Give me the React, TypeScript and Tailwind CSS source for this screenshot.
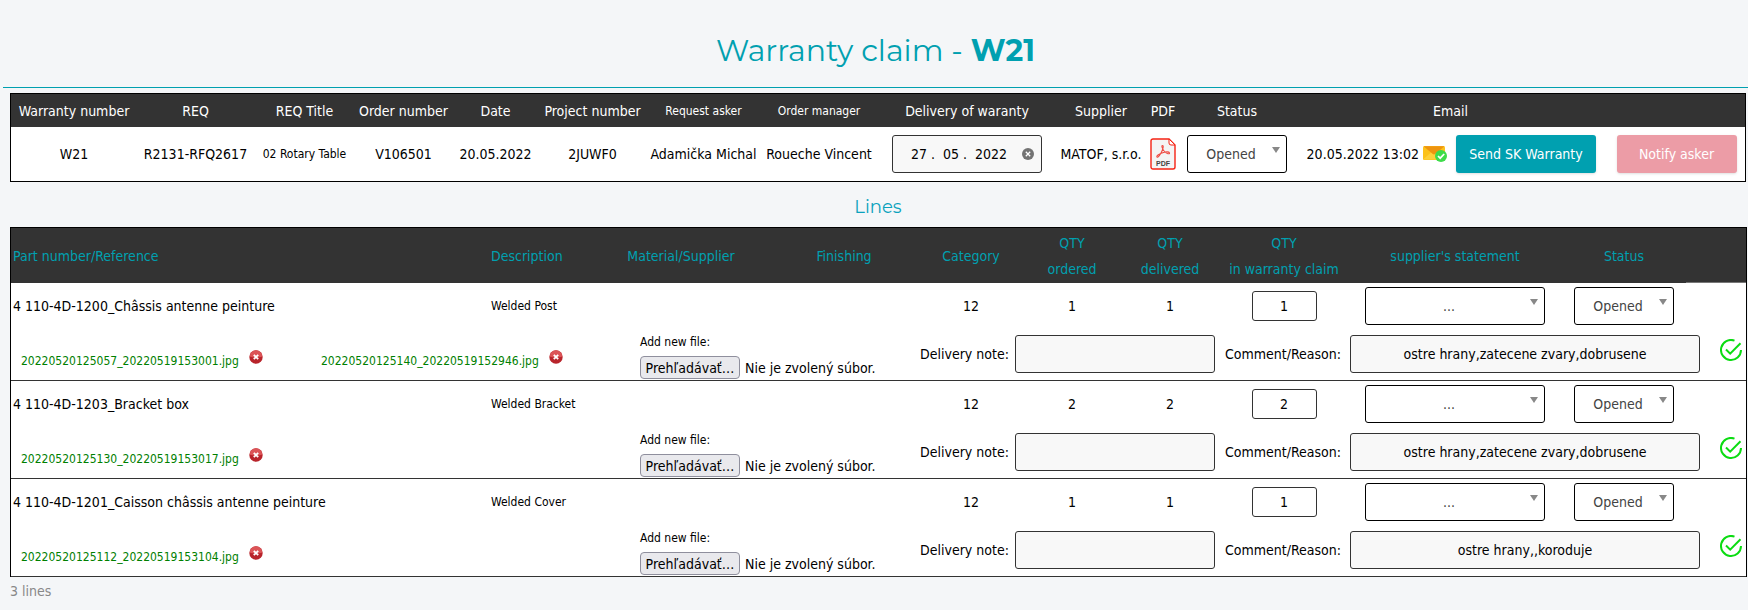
import type { ReactNode } from 'react';

const lines = [
  {
    id: 'l1',
    part: '4 110-4D-1200_Châssis antenne peinture',
    description: 'Welded Post',
    category: '12',
    qty: '1',
    files: ['20220520125057_20220519153001.jpg', '20220520125140_20220519152946.jpg'],
    comment: 'ostre hrany,zatecene zvary,dobrusene'
  },
  {
    id: 'l2',
    part: '4 110-4D-1203_Bracket box',
    description: 'Welded Bracket',
    category: '12',
    qty: '2',
    files: ['20220520125130_20220519153017.jpg'],
    comment: 'ostre hrany,zatecene zvary,dobrusene'
  },
  {
    id: 'l3',
    part: '4 110-4D-1201_Caisson châssis antenne peinture',
    description: 'Welded Cover',
    category: '12',
    qty: '1',
    files: ['20220520125112_20220519153104.jpg'],
    comment: 'ostre hrany,,koroduje'
  }
];

function PdfIcon() {
  return (
    <svg viewBox="0 0 26 32" className="w-[26px] h-8" aria-hidden="true">
      <path d="M3 1h16l6 6v22a2 2 0 0 1-2 2H3a2 2 0 0 1-2-2V3a2 2 0 0 1 2-2z" fill="#f4f4f4" stroke="#f52314" strokeWidth="1.4" />
      <path d="M19 1v4a2 2 0 0 0 2 2h4z" fill="#fff" stroke="#f52314" strokeWidth="1" />
      <path
        d="M7 19c-1-1 2-3 5-4s7-1.500 7.500 0-3 .8-5-1.500-3.500-6-2-6 .5 4-1.500 7.500S7.500 20 7 19z"
        fill="none"
        stroke="#ee4b43"
        strokeWidth="1.1"
      />
      <text x="13" y="28" textAnchor="middle" fontSize="7" fontWeight="700" fill="#444" fontFamily="Liberation Sans, sans-serif">
        PDF
      </text>
    </svg>
  );
}

function MailIcon() {
  return (
    <svg viewBox="0 0 24 16" className="w-6 h-4 shrink-0" aria-hidden="true">
      <rect x="0" y="0" width="22" height="14" rx="1.500" fill="#fcc21b" />
      <path d="M0 13.500 8 6.500h6l8 7z" fill="#fdd03a" />
      <path d="M.5.3h21L12.500 7.800a2.300 2.300 0 0 1-3 0z" fill="#ee9410" />
      <circle cx="18" cy="10" r="6" fill="#3ddc4a" />
      <path d="m15 10 2.200 2.200 4-4.200" fill="none" stroke="#fff" strokeWidth="1.700" />
    </svg>
  );
}

function RemoveIcon() {
  return (
    <svg viewBox="0 0 14 14" className="w-3.5 h-3.5" aria-hidden="true">
      <circle cx="7" cy="7" r="6.700" fill="#b8242b" />
      <path d="M.8 6.500a6.200 6.200 0 0 1 12.400 0C10 8 4 8 .8 6.500z" fill="#dc5457" />
      <path d="m4.800 4.800 4.400 4.400m0-4.400L4.800 9.200" stroke="#fff" strokeWidth="1.800" />
    </svg>
  );
}

function ClearIcon() {
  return (
    <svg viewBox="0 0 12 12" className="w-3 h-3" aria-hidden="true">
      <circle cx="6" cy="6" r="6" fill="#737373" />
      <path d="m3.800 3.800 4.400 4.400m0-4.400L3.800 8.200" stroke="#fff" strokeWidth="1.300" />
    </svg>
  );
}

function SaveIcon() {
  return (
    <svg viewBox="0 0 22 22" className="w-[22px] h-[22px]" fill="none" stroke="#0bdc12" strokeWidth="2" aria-hidden="true">
      <path d="M14.500 1.600A10 10 0 1 0 21 11" />
      <path d="m6 10.500 4.200 4.200L20.500 4.300" />
    </svg>
  );
}

function Select({ label, value, className }: { label: string; value: string; className: string }) {
  return (
    <span className={`relative inline-block align-middle ${className}`}>
      <select
        aria-label={label}
        defaultValue={value}
        className="block w-full h-[38px] pl-1 pr-4 appearance-none rounded-[3px] border border-black bg-white text-center text-[#444]"
      >
        <option>{value}</option>
      </select>
      <svg viewBox="0 0 8 6" className="absolute right-[7px] top-3 w-2 h-1.5 pointer-events-none" aria-hidden="true">
        <path d="M0 0h8L4 6z" fill="#888" />
      </svg>
    </span>
  );
}

function Th({ children, className = '' }: { children?: ReactNode; className?: string }) {
  return <th className={`p-0 font-normal whitespace-nowrap ${className}`}>{children}</th>;
}

export default function App() {
  return (
    <div className="min-h-screen bg-[#f4f6f8] pl-[3px] font-['DejaVu_Sans_Condensed','Noto_Sans',sans-serif] text-sm text-black">
      <h1 className="pt-[33px] pb-[18px] text-center font-['Montserrat','Inter',sans-serif] text-3xl leading-9 font-normal text-[#00a0b0] border-b border-[#00a0b0]">
        Warranty claim - <b className="font-bold">W21</b>
      </h1>

      <main className="pl-[7px] pr-0.5 pt-[5px]">
        <table className="w-full table-fixed border-separate border-spacing-0 border border-black bg-white text-center whitespace-nowrap">
          <colgroup>
            <col className="w-[126px]" />
            <col className="w-[117px]" />
            <col className="w-[101px]" />
            <col className="w-[97px]" />
            <col className="w-[87px]" />
            <col className="w-[107px]" />
            <col className="w-[115px]" />
            <col className="w-[116px]" />
            <col className="w-[180px]" />
            <col className="w-[88px]" />
            <col className="w-[36px]" />
            <col className="w-[112px]" />
            <col className="w-[315px]" />
            <col className="w-[137px]" />
          </colgroup>
          <thead className="bg-[#333] text-white">
            <tr className="h-[33px]">
              <Th>Warranty number</Th>
              <Th>REQ</Th>
              <Th>REQ Title</Th>
              <Th>Order number</Th>
              <Th>Date</Th>
              <Th>Project number</Th>
              <Th className="text-xs">Request asker</Th>
              <Th className="text-xs">Order manager</Th>
              <Th>Delivery of waranty</Th>
              <Th>Supplier</Th>
              <Th>PDF</Th>
              <Th>Status</Th>
              <Th>Email</Th>
              <Th />
            </tr>
          </thead>
          <tbody>
            <tr className="h-[54px]">
              <td>W21</td>
              <td>R2131-RFQ2617</td>
              <td className="text-xs">02 Rotary Table</td>
              <td>V106501</td>
              <td>20.05.2022</td>
              <td>2JUWF0</td>
              <td>Adamička Michal</td>
              <td>Roueche Vincent</td>
              <td>
                <div className="mx-auto flex h-[38px] w-[150px] items-center rounded-[3px] border border-[#333] bg-[#f8f8f8] pl-[18px] pr-[7px]">
                  <input
                    type="text"
                    aria-label="Delivery of waranty"
                    defaultValue="27 .  05 .  2022"
                    className="min-w-0 flex-1 bg-transparent"
                  />
                  <button type="button" aria-label="Clear date">
                    <ClearIcon />
                  </button>
                </div>
              </td>
              <td>MATOF, s.r.o.</td>
              <td>
                <a href="#pdf" aria-label="PDF" className="flex justify-center">
                  <PdfIcon />
                </a>
              </td>
              <td>
                <Select label="Status" value="Opened" className="w-[100px]" />
              </td>
              <td>
                <div className="flex items-center justify-end pr-3">
                  <span>20.05.2022 13:02</span>
                  <span className="ml-1 mr-[9px]">
                    <MailIcon />
                  </span>
                  <button type="button" className="h-[38px] w-[140px] rounded-[3px] bg-[#00a0b0] text-white shadow-sm">
                    Send SK Warranty
                  </button>
                </div>
              </td>
              <td>
                <button type="button" className="h-[38px] w-[120px] rounded-[3px] bg-[#ec9ca6] text-white shadow-sm">
                  Notify asker
                </button>
              </td>
            </tr>
          </tbody>
        </table>

        <h2 className="pt-[13px] pb-2 text-center font-['Montserrat','Inter',sans-serif] text-lg leading-6 font-normal text-[#0aa2bd]">
          Lines
        </h2>

        <table className="w-full table-fixed border-separate border-spacing-0 border border-b-0 border-black bg-white text-center">
          <colgroup>
            <col className="w-[478px]" />
            <col className="w-[103px]" />
            <col className="w-[178px]" />
            <col className="w-[148px]" />
            <col className="w-[106px]" />
            <col className="w-[96px]" />
            <col className="w-[100px]" />
            <col className="w-[128px]" />
            <col className="w-[214px]" />
            <col className="w-[124px]" />
            <col className="w-[60px]" />
          </colgroup>
          <thead className="bg-[#333] leading-[26px] text-[#00a0b0]">
            <tr className="h-[55px]">
              <Th className="pl-0.5 text-left">Part number/Reference</Th>
              <Th className="pl-0.5 text-left">Description</Th>
              <Th>Material/Supplier</Th>
              <Th>Finishing</Th>
              <Th>Category</Th>
              <Th>
                QTY
                <br />
                ordered
              </Th>
              <Th>
                QTY
                <br />
                delivered
              </Th>
              <Th>
                QTY
                <br />
                in warranty claim
              </Th>
              <Th>supplier's statement</Th>
              <Th>Status</Th>
              <Th className="border-b border-[#777]" />
            </tr>
          </thead>
          {lines.map((line) => (
            <tbody key={line.id}>
              <tr className="h-[45px]">
                <td className="pl-0.5 text-left">{line.part}</td>
                <td className="pl-0.5 text-left text-xs whitespace-nowrap">{line.description}</td>
                <td />
                <td />
                <td>{line.category}</td>
                <td>{line.qty}</td>
                <td>{line.qty}</td>
                <td>
                  <input
                    type="text"
                    aria-label="QTY in warranty claim"
                    defaultValue={line.qty}
                    className="h-[30px] w-[65px] rounded-[3px] border border-[#333] bg-white text-center"
                  />
                </td>
                <td>
                  <Select label="supplier's statement" value="..." className="w-[180px]" />
                </td>
                <td>
                  <Select label="Status" value="Opened" className="w-[100px]" />
                </td>
                <td />
              </tr>
              <tr className="h-[53px]">
                <td colSpan={11} className="border-b border-[#333] p-0">
                  <div className="grid h-[52px] grid-cols-[300fr_319fr_280fr_95fr_200fr_135fr_350fr_46fr] items-center pl-2.5 text-left">
                    {line.files.map((file) => (
                      <div key={file} className="flex items-center gap-2.5 pt-1.5 text-xs">
                        <a href={`#${file}`} className="pt-2 text-[#008000]">
                          {file}
                        </a>
                        <button type="button" aria-label={`Remove ${file}`}>
                          <RemoveIcon />
                        </button>
                      </div>
                    ))}
                    <div className="col-start-3 self-end pb-px">
                      <div className="pb-1.5 text-xs">Add new file:</div>
                      <div className="flex items-center gap-[5px] whitespace-nowrap">
                        <label
                          htmlFor={`file-${line.id}`}
                          className="flex h-[23px] w-[100px] items-center justify-center rounded-[4px] border border-[#8f8f9d] bg-[#e9e9ed]"
                        >
                          Prehľadávať…
                        </label>
                        <input id={`file-${line.id}`} type="file" className="sr-only" />
                        <span>Nie je zvolený súbor.</span>
                      </div>
                    </div>
                    <label htmlFor={`note-${line.id}`} className="whitespace-nowrap">
                      Delivery note:
                    </label>
                    <input
                      id={`note-${line.id}`}
                      type="text"
                      className="h-[38px] w-full rounded-[3px] border border-[#333] bg-[#f8f8f8] text-center"
                    />
                    <label htmlFor={`comment-${line.id}`} className="pl-2.5 whitespace-nowrap">
                      Comment/Reason:
                    </label>
                    <input
                      id={`comment-${line.id}`}
                      type="text"
                      defaultValue={line.comment}
                      className="h-[38px] w-full rounded-[3px] border border-[#333] bg-[#f8f8f8] text-center"
                    />
                    <button type="button" aria-label="Save line" className="justify-self-end pr-1 pb-2">
                      <SaveIcon />
                    </button>
                  </div>
                </td>
              </tr>
            </tbody>
          ))}
        </table>

        <p className="pt-1 text-[#888]">3 lines</p>
      </main>
    </div>
  );
}
